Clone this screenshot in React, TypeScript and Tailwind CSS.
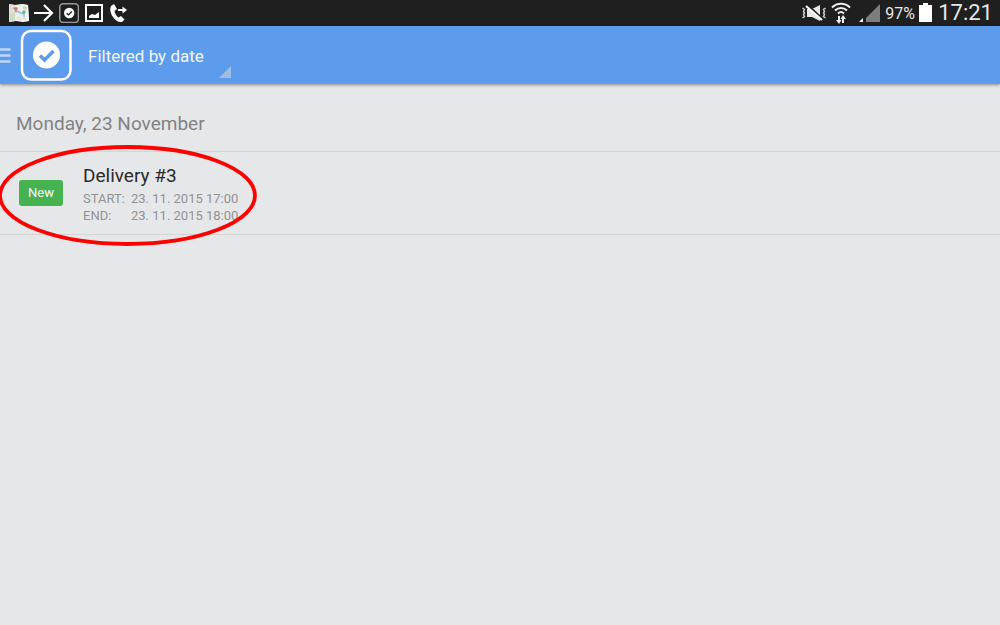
import React from "react";

function MapIcon() {
  return (
    <svg viewBox="0 0 20 20" className="h-5 w-5" aria-hidden="true">
      <path d="M0 1l6 1 6-1 7 1 1 16-7 1-6-1-7 1z" fill="#eceee8" />
      <path d="M6 2v16l-6 1V1z" fill="#dde0d5" />
      <path d="M13 1l6 1 1 16-7 1z" fill="#f4f4f2" />
      <path d="M1 11l5-1v7l-5 1z" fill="#cfdcc4" />
      <path d="M14 3l4 1v3l-4-1z" fill="#c9dbbb" />
      <path d="M6 9c5-2 5 3 9 1v4" fill="none" stroke="#8fbbe8" strokeWidth="1.500" />
      <path d="M4 5l3-1 2 1-2 4z" fill="#dc7371" />
      <circle cx="15" cy="9" r="1.800" fill="#6cba80" />
      <path d="M8 14l4 3M13 15l4 1" stroke="#e8c9b8" />
    </svg>
  );
}

function ArrowIcon() {
  return (
    <svg viewBox="0 0 20 20" className="h-5 w-5" fill="none" stroke="#fff" strokeWidth="2.200" aria-hidden="true">
      <path d="M0 10h17M10 2l8 8-8 8" />
    </svg>
  );
}

function CheckBadge({ className, frame, ring }: { className: string; frame: string; ring: number }) {
  return (
    <svg viewBox="0 0 52 52" className={className} aria-hidden="true">
      <rect x="2" y="2" width="48.500" height="48.500" rx="9" fill="none" stroke={frame} strokeWidth={ring} />
      <circle cx="26.500" cy="26" r="13.500" fill="#fff" />
      <path d="M20 26.500l4.500 4.500 9-9" fill="none" stroke="currentColor" strokeWidth="3.500" />
    </svg>
  );
}

function PictureIcon() {
  return (
    <svg viewBox="0 0 20 20" className="h-5 w-5" aria-hidden="true">
      <rect x="2" y="2" width="16" height="16" fill="none" stroke="#fff" strokeWidth="2" />
      <path d="M5 15v-2l3-2 3 1 4-3v6z" fill="#fff" />
    </svg>
  );
}

function CallIcon() {
  return (
    <svg viewBox="0 0 20 20" className="h-5 w-5" aria-hidden="true">
      <path
        d="M2 3l3-2 3 5-2.500 2c.5 3 2 5 4 6.500l2.500-1.500 3.500 3.500-2.500 2.500c-4 .5-7-2-9-5C1.500 10.500.5 6 2 3z"
        fill="#fff"
      />
      <path d="M9 7h6" stroke="#fff" strokeWidth="2" />
      <path d="M13.500 3.500l4.500 3.500-4.500 3.500z" fill="#fff" />
    </svg>
  );
}

function MuteIcon() {
  return (
    <svg viewBox="0 0 26 18" className="h-[18px] w-[26px]" aria-hidden="true">
      <path d="M6 5h5l8-4v16l-8-4H6z" fill="#e6e6e6" />
      <path d="M6 1l15 14" stroke="#1f1f1f" strokeWidth="3" />
      <path d="M5 2l16 14" stroke="#fff" strokeWidth="2" />
      <path
        d="M1.500 4l2 1.500-1 2 1 1.500-1 1.500 1 2-2 1.500M24.500 4l-2 1.500 1 2-1 1.500 1 1.500-1 2 2 1.500"
        fill="none"
        stroke="#ccc"
        strokeWidth="1.500"
      />
    </svg>
  );
}

function WifiIcon() {
  return (
    <svg viewBox="0 0 20 22" className="h-[22px] w-5" fill="none" stroke="#eee" strokeWidth="2" aria-hidden="true">
      <path d="M1 5.500c5-5 13-5 18 0M4 8.500c3.500-3.500 8.500-3.500 12 0M7 11.500c2-2 4-2 6 0" />
      <path d="M8 20v-6M12 15v6" strokeWidth="2" />
      <path d="M5 18l3 4 2.500-4zM9.500 17l2.500-4 3 4z" fill="#eee" stroke="none" />
    </svg>
  );
}

function SignalIcon() {
  return (
    <svg viewBox="0 0 22 20" className="h-5 w-[22px]" aria-hidden="true">
      <path d="M21 1v18H7v-4z" fill="#7d7d7d" />
      <path d="M4 15v4H0z" fill="#fff" />
    </svg>
  );
}

function BatteryIcon() {
  return (
    <svg viewBox="0 0 13 20" className="h-5 w-[13px]" aria-hidden="true">
      <path d="M4 0h5v2h4v17H0V2h4z" fill="#fff" />
    </svg>
  );
}

function StatusBar() {
  return (
    <div className="flex h-[26px] items-center justify-between overflow-hidden bg-[#1f1f1f] pr-[7px] pl-[9px] text-[#e6e6e6]">
      <div className="flex items-center gap-[5px]">
        <MapIcon />
        <ArrowIcon />
        <CheckBadge className="h-5 w-5 text-[#1f1f1f]" frame="#999" ring={4} />
        <PictureIcon />
        <CallIcon />
      </div>
      <div className="flex items-center">
        <MuteIcon />
        <span className="ml-1"><WifiIcon /></span>
        <span className="ml-2"><SignalIcon /></span>
        <span className="ml-1 w-8 pt-0.5 text-base leading-6">97%</span>
        <span className="ml-0.5"><BatteryIcon /></span>
        <time className="ml-[6px] text-[22px] leading-[26px]">17:21</time>
      </div>
    </div>
  );
}

function Header() {
  return (
    <header className="relative z-10 flex h-[58px] items-center bg-[#5d9bec] text-[#5d9bec] shadow-[0_1px_3px_rgba(0,0,0,0.4)]">
      <button type="button" aria-label="Open menu" className="flex h-full items-center">
        <svg viewBox="0 0 11 16" className="h-4 w-[11px]" aria-hidden="true">
          <path d="M0 2.500h10.500M0 8.500h10.500M0 14.500h10.500" stroke="#bfd8f8" strokeWidth="2.500" />
        </svg>
      </button>
      <CheckBadge className="ml-[9px] h-[52px] w-[52px]" frame="#fff" ring={2.5} />
      <button
        type="button"
        className="ml-3 flex h-full w-[147px] items-center justify-between pl-1 text-left text-[17px] leading-6 text-[#f3f7fd]"
      >
        <span className="whitespace-nowrap pt-0.5">Filtered by date</span>
        <svg viewBox="0 0 12 12" className="mb-[6px] h-3 w-3 self-end" aria-hidden="true">
          <path d="M12 0v12H0z" fill="#a3bde0" />
        </svg>
      </button>
    </header>
  );
}

function DeliveryRow() {
  return (
    <li className="relative flex items-start border-b border-[#d5d5d7] pt-3 pb-2">
      <span className="mt-4 ml-[19px] flex h-[26px] w-11 items-center justify-center rounded-[3px] bg-[#47b250] text-[13px] leading-4 text-white">
        New
      </span>
      <div className="ml-5">
        <h3 className="text-[19px] leading-6 text-[#2b2b2b]">Delivery #3</h3>
        <dl className="my-0.5 grid grid-cols-[48px_auto] text-[13px] leading-[17px] text-[#929294]">
          <dt>START:</dt>
          <dd>23. 11. 2015 17:00</dd>
          <dt>END:</dt>
          <dd>23. 11. 2015 18:00</dd>
        </dl>
      </div>
      <svg
        viewBox="0 0 260 102"
        className="pointer-events-none absolute -top-[7px] -left-0.5 h-[102px] w-[260px]"
        aria-hidden="true"
      >
        <ellipse cx="129.500" cy="50.500" rx="127.500" ry="48.500" fill="none" stroke="#fe0000" strokeWidth="3.800" />
      </svg>
    </li>
  );
}

export default function App() {
  return (
    <div className="min-h-screen overflow-x-hidden bg-[#e6e7e9] font-[Roboto,sans-serif]">
      <StatusBar />
      <Header />
      <main>
        <h2 className="border-b border-[#d5d5d7] px-4 pt-7 pb-[15px] text-[19px] leading-6 text-[#828284]">
          Monday, 23 November
        </h2>
        <ul>
          <DeliveryRow />
        </ul>
      </main>
    </div>
  );
}
